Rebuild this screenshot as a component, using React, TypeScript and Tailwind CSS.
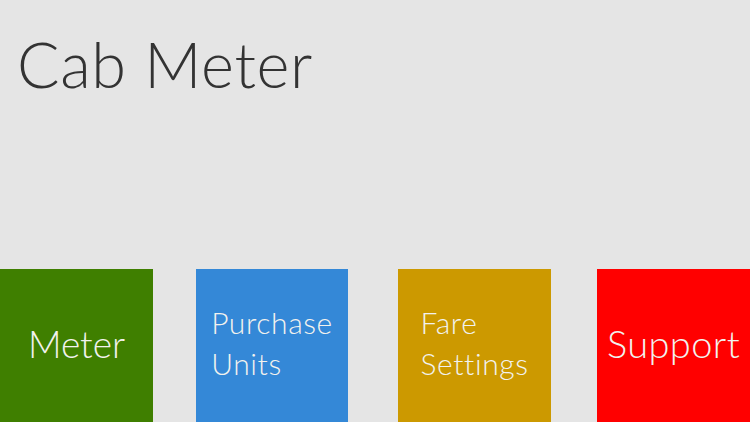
const tiles = [
  { lines: ["Meter"], bg: "bg-[#3f7f00]", w: "w-[153px]", ml: "ml-0", size: "text-[37px]" },
  { lines: ["Purchase", "Units"], bg: "bg-[#3488d7]", w: "w-[152px]", ml: "ml-[43px]", size: "text-[30px] tracking-[0.6px]" },
  { lines: ["Fare", "Settings"], bg: "bg-[#cc9900]", w: "w-[153px]", ml: "ml-[50px]", size: "text-[30px] tracking-[0.6px]" },
  { lines: ["Support"], bg: "bg-[#ff0000]", w: "w-[153px]", ml: "ml-[46px]", size: "text-[38px] tracking-[0.4px]" },
];

const App = () => {
  return (
    <div className="h-[422px] w-[750px] overflow-hidden bg-[#e5e5e5] flex flex-col font-['Lato','Liberation_Sans',sans-serif]">
      <h1 className="pl-[17px] pt-[24px] text-[63px] leading-[80px] tracking-[0.6px] font-light text-[#333333]">Cab Meter</h1>
      <div className="flex-1" />
      <div className="flex h-[153px]">
        {tiles.map((t) => (
          <button
            key={t.lines.join(" ")}
            className={`${t.bg} ${t.w} ${t.ml} shrink-0 flex items-center justify-center pb-[5px] text-[#f2f2ee] font-light`}
          >
            <span className={`${t.size} leading-[41px] text-left`}>
              {t.lines.map((l) => (
                <span key={l} className="block">{l}</span>
              ))}
            </span>
          </button>
        ))}
      </div>
    </div>
  );
};

export default App;
